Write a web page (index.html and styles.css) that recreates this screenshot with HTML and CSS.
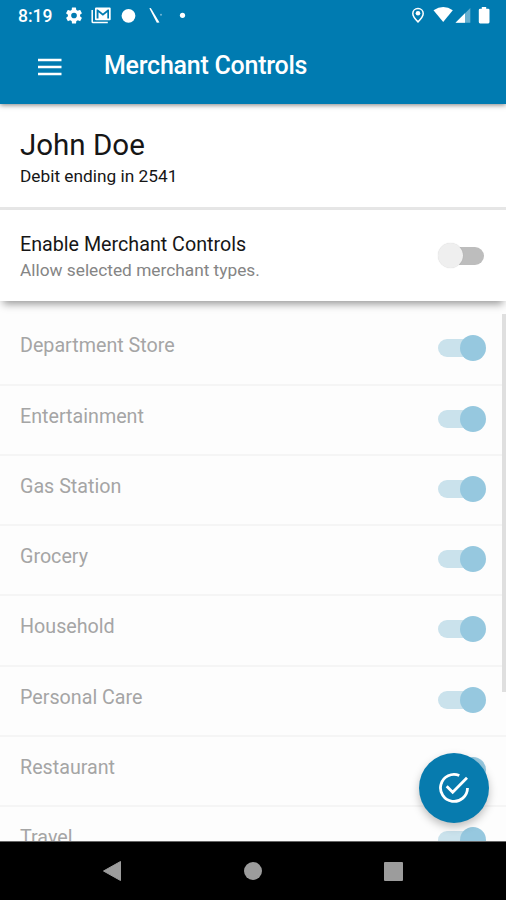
FILE: index.html
```html
<!DOCTYPE html>
<html lang="en">
<head>
<meta charset="utf-8">
<title>Merchant Controls</title>
<link rel="stylesheet" href="styles.css">
</head>
<body>
<div class="screen">
  <header class="top">
    <div class="status">
      <span class="clock">8:19</span>
      <svg class="status-left" width="130" height="20" viewBox="64 6 130 20" fill="#fff">
        <g transform="translate(64.3 5.8) scale(.81)"><path d="M19.4 13c0-.3.1-.6.1-1s0-.7-.1-1l2.1-1.600a.5.5 0 0 0 .1-.6l-2-3.500a.5.500 0 0 0-.6-.2l-2.500 1a7 7 0 0 0-1.700-1L14.400 2.500a.5.500 0 0 0-.5-.5h-4a.5.500 0 0 0-.5.400L9.100 5.100a7 7 0 0 0-1.700 1l-2.500-1a.5.500 0 0 0-.6.200l-2 3.500a.5.500 0 0 0 .1.600L4.500 11a8 8 0 0 0 0 2l-2.100 1.600a.5.500 0 0 0-.1.600l2 3.500c.1.200.4.300.6.200l2.500-1a7 7 0 0 0 1.700 1l.4 2.700c0 .2.200.4.500.4h4c.3 0 .5-.2.500-.4l.4-2.700a7 7 0 0 0 1.700-1l2.500 1c.2.100.5 0 .6-.2l2-3.500a.5.500 0 0 0-.1-.6zM12 15.500a3.500 3.500 0 1 1 0-7 3.500 3.500 0 0 1 0 7z"/></g>
        <path d="M92.200 10v11.700q0 .9.900.9h14.700" fill="none" stroke="#fff" stroke-width="1.500"/>
        <path fill-rule="evenodd" d="M96 7.500h13.700q1 0 1 1v10.800q0 1-1 1H96q-1 0-1-1V8.500q0-1 1-1zm.6 2v9h1.900v-6.200l4.400 3.400 4.400-3.400v6.200h1.700v-9h-1.200l-4.900 3.900-5-3.900z"/>
        <circle cx="128.500" cy="15.800" r="6.900"/>
        <path d="M149.300 8.200l1.500-.2 8.700 14.500-2.700.2z"/><circle cx="161" cy="14.800" r="1" opacity=".45"/>
        <circle cx="182.500" cy="15.300" r="2.600"/>
      </svg>
      <svg class="status-right" width="84" height="20" viewBox="410 6 84 20" fill="#fff">
        <path d="M418 8.600c-3 0-5.200 2.200-5.200 5 0 3.300 5.200 8.300 5.200 8.300s5.200-5 5.200-8.300c0-2.800-2.200-5-5.200-5z" fill="none" stroke="#fff" stroke-width="1.500"/>
        <circle cx="418" cy="13.300" r="2.300"/>
        <path d="M433.500 10.300q9.900-6.600 19.300 0L443.200 22z"/>
        <path d="M470.300 8v14.800H455.500z" opacity=".4"/><path d="M465 13.300v9.500h-9.500z"/>
        <path d="M481.800 7h4.400v1.800h2q1.300 0 1.300 1.200v12q0 1.400-1.300 1.400h-8.100q-1.300 0-1.300-1.400V10q0-1.200 1.300-1.200h1.700z"/>
      </svg>
    </div>
    <div class="appbar">
      <svg class="menu" width="24" height="18" viewBox="0 0 24 18"><path d="M0 2h23.500M0 9h23.500M0 16h23.500" stroke="#fff" stroke-width="2.300"/></svg>
      <h1>Merchant Controls</h1>
    </div>
  </header>
  <section class="account">
    <h2>John Doe</h2>
    <p>Debit ending in 2541</p>
  </section>
  <section class="master">
    <div class="master-copy"><h3>Enable Merchant Controls</h3><p>Allow selected merchant types.</p></div>
    <i class="switch off"></i>
  </section>
  <main class="list">
    <div class="row"><span>Department Store</span><i class="switch"></i></div>
    <div class="row"><span>Entertainment</span><i class="switch"></i></div>
    <div class="row"><span>Gas Station</span><i class="switch"></i></div>
    <div class="row"><span>Grocery</span><i class="switch"></i></div>
    <div class="row"><span>Household</span><i class="switch"></i></div>
    <div class="row"><span>Personal Care</span><i class="switch"></i></div>
    <div class="row"><span>Restaurant</span><i class="switch"></i></div>
    <div class="row"><span>Travel</span><i class="switch"></i></div>
    <div class="scrollbar"></div>
    <div class="fab"><svg width="32" height="32" viewBox="0 0 32 32" fill="none" stroke="#fff" stroke-width="2.800"><path d="M21.300 3.500A13.500 13.500 0 1 0 29.500 16"/><path d="M8.700 14.200l6 6L29 5.700"/></svg></div>
  </main>
  <footer class="nav">
    <svg width="20" height="22" viewBox="0 0 20 22"><path d="M1.500 11L18.500 1.500v19z" fill="#9c9c9c" stroke="#9c9c9c" stroke-linejoin="round"/></svg>
    <span class="home"></span>
    <span class="recent"></span>
  </footer>
</div>
</body>
</html>
```
FILE: styles.css
```css
* { box-sizing: border-box; }
body { margin: 0; font-family: Roboto, sans-serif; background: #fff; }
h1, h2, h3, p { margin: 0; font-weight: 400; white-space: nowrap; }
svg { display: block; flex: none; }
.screen { width: 506px; height: 900px; display: flex; flex-direction: column; overflow: hidden; }
.top { position: relative; z-index: 2; height: 104px; flex: none; background: #007bb1; color: #fff; box-shadow: 0 1px 5px rgba(0,0,0,.5); }
.status { height: 32px; display: flex; align-items: center; padding: 0 12px 0 18px; }
.clock { width: 46px; font-size: 17.5px; font-weight: 500; line-height: 20px; }
.status-right { margin-left: auto; }
.appbar { height: 68px; display: flex; align-items: center; padding-left: 38px; }
.menu { margin-top: 2px; }
h1 { margin-left: 42px; font-size: 25px; font-weight: 500; line-height: 30px; letter-spacing: -.25px; }
.account { height: 106px; flex: none; padding: 24px 20px 0; border-bottom: 3px solid #e6e6e6; color: #161616; }
h2 { font-size: 29.500px; line-height: 34px; }
.account p { font-size: 17.300px; line-height: 20px; margin-top: 4px; }
.master { position: relative; z-index: 1; height: 91px; flex: none; display: flex; justify-content: space-between; align-items: center; padding: 0 20px; background: #fff; box-shadow: 0 6px 8px -3px rgba(0,0,0,.4); }
.master-copy { padding-top: 3px; }
h3 { font-size: 19.700px; line-height: 26px; color: #161616; }
.master-copy p { font-size: 17.300px; line-height: 24px; color: #858585; }
.switch { position: relative; width: 49px; height: 26px; flex: none; }
.switch::before, .switch::after { content: ""; position: absolute; }
.switch::before { left: 1px; top: 4px; width: 44px; height: 18px; border-radius: 9px; background: #cae2ec; }
.switch::after { right: 0; top: 0; width: 26px; height: 26px; border-radius: 50%; background: #96c8df; }
.off::before { left: 3px; background: #bdbdbd; }
.off::after { left: 1px; width: 25px; height: 25px; background: #efefef; box-shadow: 0 0 1px rgba(0,0,0,.2); }
.list { position: relative; flex: 1; min-height: 0; overflow: hidden; padding-top: 14.300px; background: #fdfdfd; }
.row { height: 70.300px; display: flex; justify-content: space-between; align-items: flex-start; padding: 20px 20px 0; border-bottom: 2px solid #f5f5f5; color: #a5a5a5; }
.row span { font-size: 19.700px; line-height: 20px; padding-top: 1px; }
.scrollbar { position: absolute; right: 0; top: 13px; width: 4px; height: 378px; background: #dfdfdf; }
.fab { position: absolute; right: 17px; bottom: 18px; width: 70px; height: 70px; border-radius: 50%; background: #077bae; display: flex; align-items: center; justify-content: center; box-shadow: 0 4px 8px rgba(0,0,0,.25); }
.nav { height: 59px; flex: none; display: flex; align-items: center; padding-left: 102px; background: #000; border-top: 1px solid #666; }
.home { width: 18px; height: 18px; margin-left: 122px; border-radius: 50%; background: #9c9c9c; }
.recent { width: 19px; height: 19px; margin-left: 122px; border-radius: 1px; background: #9c9c9c; }
```
